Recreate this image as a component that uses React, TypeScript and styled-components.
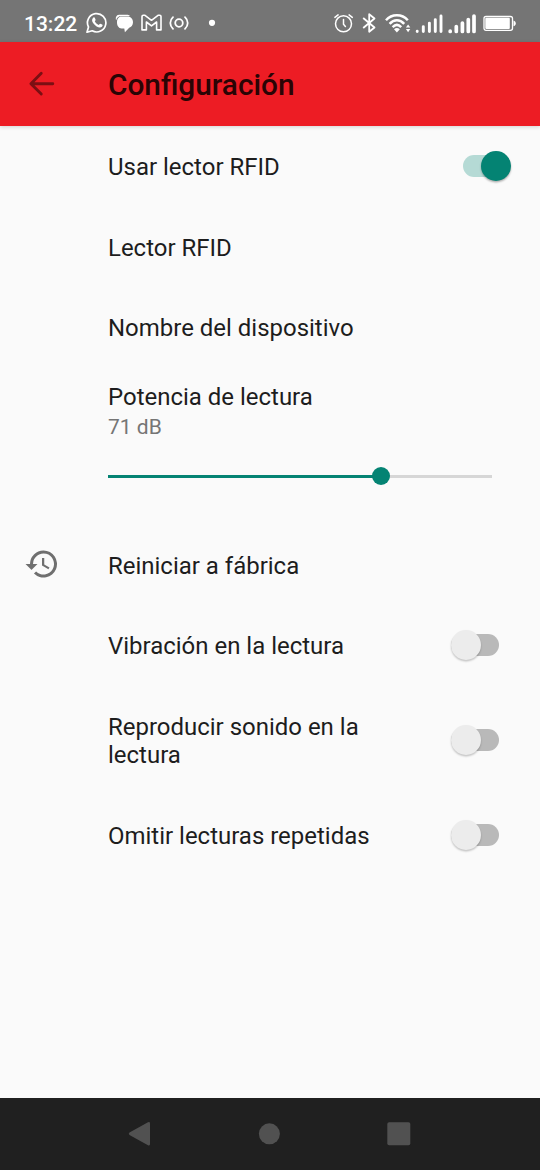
import React, { useState } from "react";
import styled, { createGlobalStyle } from "styled-components";

const GlobalStyle = createGlobalStyle`
  * { box-sizing: border-box; }
  body { margin: 0; background: #fafafa; }
`;

const Screen = styled.div`
  width: 540px;
  height: 1170px;
  display: flex;
  flex-direction: column;
  background: #fafafa;
  font-family: Roboto, "Liberation Sans", sans-serif;
  color: #1d1d1d;
  overflow: hidden;
`;

const StatusBar = styled.header`
  height: 42px;
  flex: none;
  display: flex;
  justify-content: space-between;
  align-items: center;
  padding: 4px 23px 0 24px;
  background: #757575;
  color: #fff;
`;

const StatusGroup = styled.div`
  display: flex;
  align-items: center;
`;

const Clock = styled.span`
  width: 61.5px;
  padding-top: 2px;
  font-size: 21px;
  font-weight: 500;
  line-height: 24px;
  white-space: nowrap;
`;

const Glyph = styled.svg<{ $gap?: number }>`
  display: block;
  flex: none;
  margin-left: ${(p) => p.$gap ?? 0}px;
`;

const AppBar = styled.div`
  height: 84px;
  flex: none;
  display: flex;
  align-items: center;
  padding-left: 24px;
  background: #ed1c24;
  box-shadow: 0 1px 4px rgba(0, 0, 0, 0.16);
`;

const BackButton = styled.button`
  width: 84px;
  height: 36px;
  padding: 0;
  border: 0;
  background: none;
  text-align: left;
`;

const Title = styled.h1`
  margin: 2px 0 0;
  font-size: 29.8px;
  font-weight: 500;
  line-height: 36px;
  color: #2a0405;
`;

const Settings = styled.main`
  flex: 1;
  display: flex;
  flex-direction: column;
`;

const Row = styled.div<{ $height: number }>`
  height: ${(p) => p.$height}px;
  flex: none;
  display: flex;
  align-items: center;
`;

const IconSlot = styled.div`
  width: 108px;
  flex: none;
  padding: 0 0 3px 23.5px;
`;

const Label = styled.div`
  width: 300px;
  font-size: 23.97px;
  line-height: 28px;
`;

const WidgetSlot = styled.div<{ $shift: number }>`
  margin-left: ${(p) => p.$shift}px;
  padding-bottom: 2px;
`;

const Track = styled.button<{ $on: boolean }>`
  display: flex;
  justify-content: ${(p) => (p.$on ? "flex-end" : "flex-start")};
  align-items: center;
  width: 48px;
  height: 22px;
  padding: 0;
  border: 0;
  border-radius: 11px;
  background: ${(p) => (p.$on ? "#b5dad5" : "#b9b9b9")};
`;

const Thumb = styled.span<{ $on: boolean }>`
  width: 30px;
  height: 30px;
  flex: none;
  border-radius: 50%;
  background: ${(p) => (p.$on ? "#048373" : "#ececec")};
  box-shadow: 0 1.5px 2px rgba(0, 0, 0, ${(p) => (p.$on ? 0.3 : 0.22)});
`;

const SliderRow = styled.div`
  height: 157px;
  flex: none;
  padding: 14px 48px 0 108px;
`;

const Summary = styled.div`
  margin-top: 2px;
  font-size: 21px;
  line-height: 28px;
  color: #757575;
`;

const Slider = styled.div`
  height: 18px;
  margin-top: 26.5px;
  display: flex;
  align-items: center;
`;

const SliderFill = styled.div`
  height: 3px;
  background: #048373;
`;

const SliderThumb = styled.div`
  width: 18px;
  height: 18px;
  margin: 0 -9px;
  flex: none;
  z-index: 1;
  border-radius: 50%;
  background: #048373;
`;

const SliderRest = styled.div`
  height: 3px;
  flex: 1;
  background: #d6d6d6;
`;

const NavBar = styled.nav`
  height: 72px;
  flex: none;
  display: flex;
  align-items: center;
  justify-content: space-between;
  padding: 0 129px 0 128px;
  background: #202020;
`;

const Switch = ({ initial }: { initial: boolean }) => {
  const [on, setOn] = useState(initial);
  return (
    <Track $on={on} role="switch" aria-checked={on} onClick={() => setOn(!on)}>
      <Thumb $on={on} />
    </Track>
  );
};

const WhatsAppIcon = () => (
  <Glyph width="22" height="24" fill="none" stroke="#fff" strokeWidth="1.7">
    <path d="M1 21.2 2.5 16A9.2 9.2 0 1 1 6.2 19.8Z" strokeLinejoin="round" />
    <path
      d="M7.2 6.7c.8-.8 1.4-.5 1.7.3l.7 1.7c.2.5-.6 1.2-.8 1.6.9 1.8 2.1 2.8 3.9 3.6.5-.3 1.1-1.4 1.6-1.2l1.9.9c.8.4.4 1.5-.3 2.1-1.5 1.2-3.5.7-5.3-.3-2-1.1-3.7-3.1-4.3-4.8-.5-1.5 0-3 .9-3.9Z"
      fill="#fff"
      stroke="none"
    />
  </Glyph>
);

const ChatIcon = () => (
  <Glyph $gap={7} width="19" height="24" fill="#fff">
    <path d="M6.5 5.6h6.3c3 0 5.2 2.6 5.2 5.7 0 3-1.9 5-3.8 5.5L9.900 21.200 9.300 17.400H6.500C3.600 17.400 2 14.500 2 11.500 2 8.200 3.600 5.600 6.500 5.600Z" />
    <path d="M1.2 9.200C.2 7 1.200 3.700 4 3.700h7.300c1.800 0 3 .3 3.800 1.300H6.300C3.500 5 1.800 6.700 1.200 9.200Z" />
  </Glyph>
);

const MailIcon = () => (
  <Glyph $gap={7} width="21" height="24" fill="none" stroke="#fff" strokeWidth="1.6" strokeLinejoin="round">
    <path d="M1 5.500Q1 4.300 2.200 4.300H4L10.500 9.300 17 4.300h1.800Q20 4.300 20 5.500V18.900H15.600V11L10.500 14.900 5.400 11v7.900H1Z" />
  </Glyph>
);

const HotspotIcon = () => (
  <Glyph $gap={7} width="20" height="24" fill="none" stroke="#fff" strokeWidth="1.8" strokeLinecap="round">
    <circle cx="10" cy="12" r="3.8" />
    <path d="M4 6.200C.4 9.500.4 14.500 4 17.800M16 6.200c3.600 3.300 3.600 8.300 0 11.600" />
  </Glyph>
);

const DotIcon = () => (
  <Glyph $gap={19} width="8" height="24" fill="#fff">
    <circle cx="4" cy="11.8" r="3.1" />
  </Glyph>
);

const AlarmIcon = () => (
  <Glyph width="20" height="24" fill="none" stroke="#fff" strokeWidth="1.5" strokeLinecap="round">
    <circle cx="9.5" cy="12.8" r="8" />
    <path d="M9.500 8.500v4.700l1.900 2.200M.9 6.400 4.100 3.900M18.300 6.400 15.100 3.900" />
  </Glyph>
);

const BluetoothIcon = () => (
  <Glyph $gap={7.5} width="15" height="24" fill="none" stroke="#fff" strokeWidth="1.8" strokeLinejoin="round">
    <path d="M1.200 7 12.500 16.500 7.200 20.800V3.200L12.500 7.500 1.200 17" />
  </Glyph>
);

const WifiIcon = () => (
  <Glyph $gap={8.5} width="27" height="24" fill="none" stroke="#fff" strokeWidth="2.5">
    <path d="M1 9.300C6.800 2.600 17 2.600 22.800 9.300" />
    <path d="M4.600 12.800C9 7.900 14.800 7.900 19.200 12.800" />
    <path d="M7.600 16.100c2.800-2.800 5.800-2.800 8.600 0" />
    <path d="M9 18.200q2.900-2.200 5.800 0l-2.900 3.200Z" fill="#fff" stroke="none" />
    <path d="M20.900 16.400 23.100 13.400l2.200 3ZM20.900 18l2.200 3.200 2.200-3.200Z" fill="#fff" stroke="none" />
  </Glyph>
);

const SignalIcon = ({ bold }: { bold?: boolean }) => (
  <Glyph $gap={bold ? 4 : 3} width="29" height="24" stroke="#fff" strokeWidth={bold ? 3.7 : 2.9} strokeLinecap="round">
    <path d="M2.200 20.200v.3M8.300 15.600v4.900M14.400 12.100v8.400M20.300 8.600v11.900M26 5v15.500" />
  </Glyph>
);

const BatteryIcon = () => (
  <Glyph $gap={6} width="34" height="24" fill="#fff">
    <rect x="1" y="5.5" width="28.5" height="13.8" rx="2" fill="none" stroke="#fff" strokeWidth="1.3" />
    <rect x="2.3" y="6.7" width="24.5" height="11.4" rx="1" />
    <path d="M30.500 9.500c1.200.4 2.300 1.500 2.300 2.900s-1.100 2.500-2.300 2.900Z" />
  </Glyph>
);

const BackArrow = () => (
  <Glyph width="36" height="36" viewBox="0 0 24 24" fill="none" stroke="#7b0f13" strokeWidth="1.9" strokeLinecap="round" strokeLinejoin="round">
    <path d="M19.200 11.800H4.800M11.500 4.900 4.600 11.800l6.900 6.900" />
  </Glyph>
);

const HistoryIcon = () => (
  <Glyph width="36" height="36" viewBox="0 0 24 24" fill="#6f6f6f">
    <path d="M13 3a9 9 0 0 0-9 9H1l3.890 3.890.070.140L9 12H6a7 7 0 1 1 2.060 4.940l-1.420 1.420A9 9 0 1 0 13 3Zm-1 5v5l4.280 2.540.720-1.210-3.500-2.080V8H12Z" />
  </Glyph>
);

type Item = {
  label: React.ReactNode;
  height: number;
  icon?: React.ReactNode;
  on?: boolean;
};

const SettingRow = ({ label, height, icon, on }: Item) => (
  <Row $height={height}>
    <IconSlot>{icon}</IconSlot>
    <Label>{label}</Label>
    {on !== undefined && (
      <WidgetSlot $shift={on ? 54.5 : 42.5}>
        <Switch initial={on} />
      </WidgetSlot>
    )}
  </Row>
);

export default function App() {
  const power = 71;
  return (
    <>
      <GlobalStyle />
      <Screen>
        <StatusBar>
          <StatusGroup>
            <Clock>13:22</Clock>
            <WhatsAppIcon />
            <ChatIcon />
            <MailIcon />
            <HotspotIcon />
            <DotIcon />
          </StatusGroup>
          <StatusGroup>
            <AlarmIcon />
            <BluetoothIcon />
            <WifiIcon />
            <SignalIcon />
            <SignalIcon bold />
            <BatteryIcon />
          </StatusGroup>
        </StatusBar>
        <AppBar>
          <BackButton aria-label="Atrás">
            <BackArrow />
          </BackButton>
          <Title>Configuración</Title>
        </AppBar>
        <Settings>
          <SettingRow label="Usar lector RFID" height={81} on={true} />
          <SettingRow label="Lector RFID" height={81} />
          <SettingRow label="Nombre del dispositivo" height={80.5} />
          <SliderRow>
            <Label>Potencia de lectura</Label>
            <Summary>{power} dB</Summary>
            <Slider>
              <SliderFill style={{ width: `${power}%` }} />
              <SliderThumb />
              <SliderRest />
            </Slider>
          </SliderRow>
          <SettingRow label="Reiniciar a fábrica" height={80.5} icon={<HistoryIcon />} />
          <SettingRow label="Vibración en la lectura" height={80.5} on={false} />
          <SettingRow label="Reproducir sonido en la lectura" height={109} on={false} />
          <SettingRow label="Omitir lecturas repetidas" height={80.5} on={false} />
        </Settings>
        <NavBar>
          <Glyph width="23" height="26" fill="#515151">
            <path d="M1.500 11.500 20 1.300q2-.8 2 1.200v20.500q0 2-2 1.200L1.500 14q-1.500-1.200 0-2.500Z" />
          </Glyph>
          <Glyph width="22" height="22" fill="#515151">
            <circle cx="11.4" cy="10.8" r="10.5" />
          </Glyph>
          <Glyph width="24" height="24" fill="#515151">
            <rect x=".3" y=".3" width="23" height="23" rx="1.8" />
          </Glyph>
        </NavBar>
      </Screen>
    </>
  );
}
